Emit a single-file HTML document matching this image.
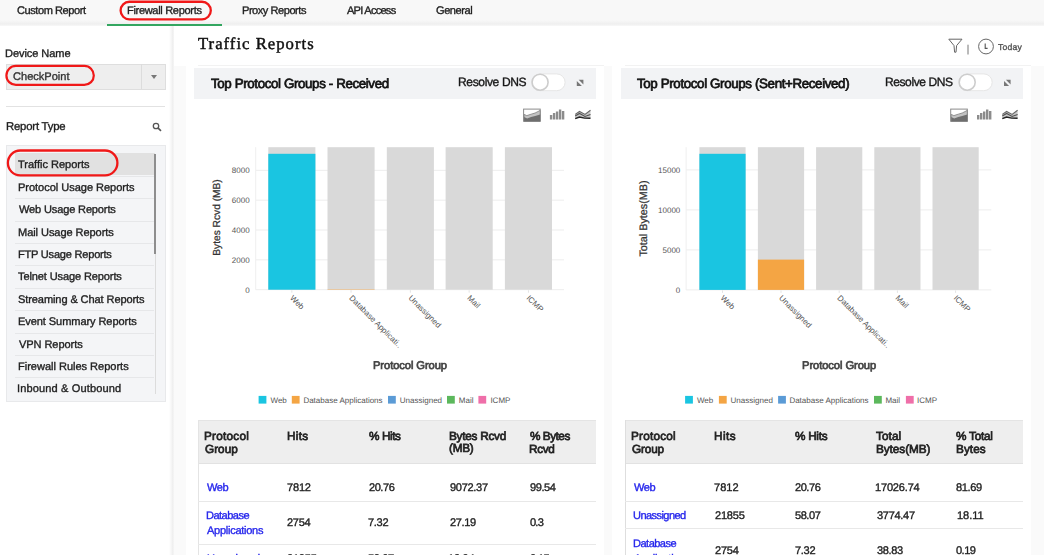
<!DOCTYPE html>
<html><head><meta charset="utf-8"><title>Traffic Reports</title><style>
*{margin:0;padding:0;box-sizing:border-box}
html,body{width:1044px;height:555px;overflow:hidden;background:#fff}
body{position:relative;font-family:'Liberation Sans', sans-serif;text-rendering:geometricPrecision}
.t{position:absolute;white-space:nowrap;will-change:transform}
.r{-webkit-text-stroke:0.35px currentColor}
.s{-webkit-text-stroke:0.45px currentColor}
.sb{-webkit-text-stroke:0.7px currentColor}
.a{position:absolute}
</style></head>
<body>

<!-- top bar -->
<div class="a" style="left:0;top:0;width:1044px;height:26px;background:linear-gradient(#f8f8f8 0,#f8f8f8 20px,#efefef 24px,#f6f6f6 25.5px,#fff 26px)"></div>
<div class="a" style="left:107px;top:23.5px;width:115px;height:2.1px;background:#33a660"></div>
<!-- sidebar right shadow line -->
<div class="a" style="left:169px;top:26px;width:5px;height:529px;background:linear-gradient(90deg,#fff,#f3f3f3 60%,#ececec 80%,#fbfbfb)"></div>
<!-- main bg -->
<div class="a" style="left:174px;top:66px;width:870px;height:489px;background:#fafafa"></div>
<div class="a" style="left:186px;top:65.8px;width:418px;height:490px;background:#fff"></div><div class="a" style="left:198px;top:65px;width:406px;height:1px;background:#f2f2f2"></div>
<div class="a" style="left:612px;top:65.8px;width:419px;height:490px;background:#fff"></div><div class="a" style="left:625px;top:65px;width:406px;height:1px;background:#f2f2f2"></div>
<!-- card headers -->
<div class="a" style="left:194px;top:67.5px;width:402px;height:31.5px;background:#f2f3f5"></div>
<div class="a" style="left:621px;top:67.5px;width:402px;height:31.5px;background:#f2f3f5"></div>
<!-- select -->
<div class="a" style="left:5.5px;top:63.5px;width:160px;height:26px;background:#eeeeee;border:1px solid #dedede"></div>
<div class="a" style="left:141px;top:64px;width:1px;height:25px;background:#dcdcdc"></div>
<div class="a" style="left:150.6px;top:74.6px;width:0;height:0;border-left:3px solid transparent;border-right:3px solid transparent;border-top:4px solid #777"></div>
<div class="a" style="left:6px;top:106px;width:159px;height:1px;background:#e2e2e2"></div>
<!-- list panel -->
<div class="a" style="left:5.5px;top:144.5px;width:160px;height:257px;background:#f4f5f7;border:1px solid #e8e9eb"></div>
<div class="a" style="left:14.5px;top:153.3px;width:140px;height:22px;background:#e1e1e1"></div>
<div class="a" style="left:154.3px;top:153.5px;width:1.8px;height:100px;background:#8e8e8e"></div>
<div class="a" style="left:154.5px;top:253.5px;width:1.5px;height:140px;background:#dcdcdc"></div>
<div class="a" style="left:14.7px;top:175.7px;width:139.6px;height:1px;background:#e6e7e9"></div>
<div class="a" style="left:14.7px;top:198.1px;width:139.6px;height:1px;background:#e6e7e9"></div>
<div class="a" style="left:14.7px;top:220.5px;width:139.6px;height:1px;background:#e6e7e9"></div>
<div class="a" style="left:14.7px;top:242.9px;width:139.6px;height:1px;background:#e6e7e9"></div>
<div class="a" style="left:14.7px;top:265.3px;width:139.6px;height:1px;background:#e6e7e9"></div>
<div class="a" style="left:14.7px;top:287.7px;width:139.6px;height:1px;background:#e6e7e9"></div>
<div class="a" style="left:14.7px;top:310.1px;width:139.6px;height:1px;background:#e6e7e9"></div>
<div class="a" style="left:14.7px;top:332.5px;width:139.6px;height:1px;background:#e6e7e9"></div>
<div class="a" style="left:14.7px;top:354.9px;width:139.6px;height:1px;background:#e6e7e9"></div>
<div class="a" style="left:14.7px;top:377.3px;width:139.6px;height:1px;background:#e6e7e9"></div>

<!-- tables -->
<div class="a" style="left:198px;top:419.5px;width:398px;height:44px;background:#eeeeee;border-top:1px solid #e4e4e4;border-bottom:1px solid #e2e2e2"></div>
<div class="a" style="left:198px;top:419.5px;width:1px;height:136px;background:#e4e4e4"></div>
<div class="a" style="left:198px;top:500.5px;width:398px;height:1px;background:#e8e8e8"></div>
<div class="a" style="left:198px;top:544px;width:398px;height:1px;background:#e8e8e8"></div>
<div class="a" style="left:624.5px;top:419.5px;width:398px;height:44px;background:#eeeeee;border-top:1px solid #e4e4e4;border-bottom:1px solid #e2e2e2"></div>
<div class="a" style="left:624.5px;top:419.5px;width:1px;height:136px;background:#dedede"></div>
<div class="a" style="left:624.5px;top:500.5px;width:398px;height:1px;background:#e8e8e8"></div>
<div class="a" style="left:624.5px;top:528.3px;width:398px;height:1px;background:#e8e8e8"></div>

<svg class="a" style="left:0;top:0" width="1044" height="555" viewBox="0 0 1044 555" font-family="Liberation Sans, sans-serif"><line x1="255.7" y1="289.7" x2="564" y2="289.7" stroke="#ededed" stroke-width="1"/><text x="249.6" y="292.59999999999997" text-anchor="end" font-size="8" fill="#555">0</text><line x1="255.7" y1="259.85" x2="564" y2="259.85" stroke="#ededed" stroke-width="1"/><text x="249.6" y="262.75" text-anchor="end" font-size="8" fill="#555">2000</text><line x1="255.7" y1="230.0" x2="564" y2="230.0" stroke="#ededed" stroke-width="1"/><text x="249.6" y="232.9" text-anchor="end" font-size="8" fill="#555">4000</text><line x1="255.7" y1="200.15" x2="564" y2="200.15" stroke="#ededed" stroke-width="1"/><text x="249.6" y="203.05" text-anchor="end" font-size="8" fill="#555">6000</text><line x1="255.7" y1="170.3" x2="564" y2="170.3" stroke="#ededed" stroke-width="1"/><text x="249.6" y="173.20000000000002" text-anchor="end" font-size="8" fill="#555">8000</text><line x1="255.7" y1="147.2" x2="255.7" y2="289.7" stroke="#efefef" stroke-width="1"/><rect x="268.3" y="147.2" width="47.1" height="142.5" fill="#d9d9d9"/><rect x="268.3" y="153.8" width="47.1" height="135.89999999999998" fill="#1ac5e1"/><line x1="291.85" y1="290.2" x2="291.85" y2="292.7" stroke="#e4e4e4" stroke-width="1"/><text transform="translate(289.45000000000005,298.4) rotate(45)" font-size="8" fill="#555">Web</text><rect x="327.5" y="147.2" width="47.1" height="142.5" fill="#d9d9d9"/><rect x="327.5" y="289.3" width="47.1" height="0.39999999999997726" fill="#f4a544"/><line x1="351.05" y1="290.2" x2="351.05" y2="292.7" stroke="#e4e4e4" stroke-width="1"/><text transform="translate(348.65000000000003,298.4) rotate(45)" font-size="8" fill="#555">Database Applicati..</text><rect x="386.8" y="147.2" width="47.1" height="142.5" fill="#d9d9d9"/><line x1="410.35" y1="290.2" x2="410.35" y2="292.7" stroke="#e4e4e4" stroke-width="1"/><text transform="translate(407.95000000000005,298.4) rotate(45)" font-size="8" fill="#555">Unassigned</text><rect x="445.6" y="147.2" width="47.1" height="142.5" fill="#d9d9d9"/><line x1="469.15000000000003" y1="290.2" x2="469.15000000000003" y2="292.7" stroke="#e4e4e4" stroke-width="1"/><text transform="translate(466.75000000000006,298.4) rotate(45)" font-size="8" fill="#555">Mail</text><rect x="504.9" y="147.2" width="47.1" height="142.5" fill="#d9d9d9"/><line x1="528.4499999999999" y1="290.2" x2="528.4499999999999" y2="292.7" stroke="#e4e4e4" stroke-width="1"/><text transform="translate(526.05,298.4) rotate(45)" font-size="8" fill="#555">ICMP</text><text transform="translate(219.6,217.5) rotate(-90)" text-anchor="middle" font-size="10.2" fill="#333" stroke="#333" stroke-width="0.25">Bytes Rcvd (MB)</text><line x1="686.1" y1="289.9" x2="991.3" y2="289.9" stroke="#ededed" stroke-width="1"/><text x="680.3" y="292.79999999999995" text-anchor="end" font-size="8" fill="#555">0</text><line x1="686.1" y1="249.9" x2="991.3" y2="249.9" stroke="#ededed" stroke-width="1"/><text x="680.3" y="252.8" text-anchor="end" font-size="8" fill="#555">5000</text><line x1="686.1" y1="209.9" x2="991.3" y2="209.9" stroke="#ededed" stroke-width="1"/><text x="680.3" y="212.8" text-anchor="end" font-size="8" fill="#555">10000</text><line x1="686.1" y1="169.9" x2="991.3" y2="169.9" stroke="#ededed" stroke-width="1"/><text x="680.3" y="172.8" text-anchor="end" font-size="8" fill="#555">15000</text><line x1="686.1" y1="147.2" x2="686.1" y2="289.9" stroke="#efefef" stroke-width="1"/><rect x="699.4" y="147.2" width="46.2" height="142.7" fill="#d9d9d9"/><rect x="699.4" y="153.8" width="46.2" height="136.09999999999997" fill="#1ac5e1"/><line x1="722.5" y1="290.4" x2="722.5" y2="292.9" stroke="#e4e4e4" stroke-width="1"/><text transform="translate(720.1,298.4) rotate(45)" font-size="8" fill="#555">Web</text><rect x="757.9" y="147.2" width="46.2" height="142.7" fill="#d9d9d9"/><rect x="757.9" y="259.6" width="46.2" height="30.299999999999955" fill="#f4a544"/><line x1="781.0" y1="290.4" x2="781.0" y2="292.9" stroke="#e4e4e4" stroke-width="1"/><text transform="translate(778.6,298.4) rotate(45)" font-size="8" fill="#555">Unassigned</text><rect x="816.1" y="147.2" width="46.2" height="142.7" fill="#d9d9d9"/><line x1="839.2" y1="290.4" x2="839.2" y2="292.9" stroke="#e4e4e4" stroke-width="1"/><text transform="translate(836.8000000000001,298.4) rotate(45)" font-size="8" fill="#555">Database Applicati..</text><rect x="874.3" y="147.2" width="46.2" height="142.7" fill="#d9d9d9"/><line x1="897.4" y1="290.4" x2="897.4" y2="292.9" stroke="#e4e4e4" stroke-width="1"/><text transform="translate(895.0,298.4) rotate(45)" font-size="8" fill="#555">Mail</text><rect x="932.5" y="147.2" width="46.2" height="142.7" fill="#d9d9d9"/><line x1="955.6" y1="290.4" x2="955.6" y2="292.9" stroke="#e4e4e4" stroke-width="1"/><text transform="translate(953.2,298.4) rotate(45)" font-size="8" fill="#555">ICMP</text><text transform="translate(647.0,218.5) rotate(-90)" text-anchor="middle" font-size="10.8" fill="#333" stroke="#333" stroke-width="0.25">Total Bytes(MB)</text><rect x="258.6" y="395.9" width="7.8" height="7.7" fill="#1ac5e1"/><text x="270.5" y="402.6" font-size="8" fill="#555">Web</text><rect x="291.8" y="395.9" width="7.8" height="7.7" fill="#f4a544"/><text x="303.4" y="402.6" font-size="8" fill="#555">Database Applications</text><rect x="388" y="395.9" width="7.8" height="7.7" fill="#5b9bd6"/><text x="399.8" y="402.6" font-size="8" fill="#555">Unassigned</text><rect x="447" y="395.9" width="7.8" height="7.7" fill="#5cb85c"/><text x="458.8" y="402.6" font-size="8" fill="#555">Mail</text><rect x="478.4" y="395.9" width="7.8" height="7.7" fill="#ef6fa9"/><text x="490.4" y="402.6" font-size="8" fill="#555">ICMP</text><rect x="685.1" y="395.9" width="7.8" height="7.7" fill="#1ac5e1"/><text x="696.9" y="402.6" font-size="8" fill="#555">Web</text><rect x="718.9" y="395.9" width="7.8" height="7.7" fill="#f4a544"/><text x="730.6" y="402.6" font-size="8" fill="#555">Unassigned</text><rect x="778.1" y="395.9" width="7.8" height="7.7" fill="#5b9bd6"/><text x="789.4" y="402.6" font-size="8" fill="#555">Database Applications</text><rect x="874" y="395.9" width="7.8" height="7.7" fill="#5cb85c"/><text x="885.4" y="402.6" font-size="8" fill="#555">Mail</text><rect x="905.9" y="395.9" width="7.8" height="7.7" fill="#ef6fa9"/><text x="917" y="402.6" font-size="8" fill="#555">ICMP</text><rect x="120.6" y="1.75" width="90.2" height="17.6" rx="8.8" fill="none" stroke="#f01818" stroke-width="2.3"/><rect x="6.4" y="65.9" width="87.4" height="19" rx="9.5" fill="none" stroke="#f01818" stroke-width="2.2"/><rect x="7.9" y="150.5" width="109.5" height="24.9" rx="12.4" fill="none" stroke="#f01818" stroke-width="2.3"/><rect x="531.7" y="73.9" width="33.4" height="16.8" rx="8.4" fill="#fff" stroke="#e6e6e6" stroke-width="1"/><circle cx="540.1" cy="82.2" r="8" fill="#fff" stroke="#cdcdcd" stroke-width="1.6"/><rect x="958.8" y="73.9" width="33.4" height="16.8" rx="8.4" fill="#fff" stroke="#e6e6e6" stroke-width="1"/><circle cx="967.1999999999999" cy="82.2" r="8" fill="#fff" stroke="#cdcdcd" stroke-width="1.6"/><path d="M576.8 80.9 L576.8 86 L581.9 86 Z M578.6999999999999 79.8 L583.4 79.8 L583.4 84.5 Z" fill="#777"/><path d="M1004.0 80.9 L1004.0 86 L1009.1 86 Z M1005.9 79.8 L1010.6 79.8 L1010.6 84.5 Z" fill="#777"/><rect x="523.6" y="109.1" width="16.6" height="12.2" fill="#fff" stroke="#8a8a8a" stroke-width="1"/><path d="M524.1 114.4 L526.8000000000001 115.6 L531.1 114.2 L535.1 113 L540.2 110.4 L540.2 121.3 L524.1 121.3 Z" fill="#c2c2c2" stroke="#808080" stroke-width="0.8"/><path d="M524.1 117 L527.1 118.5 L531.1 117 L535.1 116 L540.2 114.5 L540.2 121.3 L524.1 121.3 Z" fill="#6e6e6e"/><rect x="549.9" y="115.0" width="2.4" height="4.5" fill="#8c8c8c"/><rect x="552.9" y="113.0" width="2.4" height="6.5" fill="#8c8c8c"/><rect x="555.9" y="111.5" width="2.4" height="8" fill="#8c8c8c"/><rect x="558.9" y="109.5" width="2.4" height="10" fill="#8c8c8c"/><rect x="561.9" y="111.0" width="2.4" height="8.5" fill="#8c8c8c"/><path d="M575.2 118.6 L575.2 114.4 L579.5 111.5 L585 114.4 L590.5 110.2 L590.5 118.3 L584.5 118.1 L579.5 117 Z" fill="#c8c8c8"/><path d="M575.2 114.4 L579.5 111.5 L585 114.4 L590.5 110.2" fill="none" stroke="#666" stroke-width="1.1"/><path d="M575.2 115.9 L579.5 113.4 L585 116.4 L590.5 114.6" fill="none" stroke="#505050" stroke-width="1.1"/><path d="M575.2 118.6 L579.5 117 L584.5 118.1 L590.5 118.3" fill="none" stroke="#222" stroke-width="1.4"/><rect x="950.7" y="109.1" width="16.6" height="12.2" fill="#fff" stroke="#8a8a8a" stroke-width="1"/><path d="M951.2 114.4 L953.9000000000001 115.6 L958.2 114.2 L962.2 113 L967.3000000000001 110.4 L967.3000000000001 121.3 L951.2 121.3 Z" fill="#c2c2c2" stroke="#808080" stroke-width="0.8"/><path d="M951.2 117 L954.2 118.5 L958.2 117 L962.2 116 L967.3000000000001 114.5 L967.3000000000001 121.3 L951.2 121.3 Z" fill="#6e6e6e"/><rect x="977.0" y="115.0" width="2.4" height="4.5" fill="#8c8c8c"/><rect x="980.0" y="113.0" width="2.4" height="6.5" fill="#8c8c8c"/><rect x="983.0" y="111.5" width="2.4" height="8" fill="#8c8c8c"/><rect x="986.0" y="109.5" width="2.4" height="10" fill="#8c8c8c"/><rect x="989.0" y="111.0" width="2.4" height="8.5" fill="#8c8c8c"/><path d="M1002.3000000000001 118.6 L1002.3000000000001 114.4 L1006.6 111.5 L1012.1 114.4 L1017.6 110.2 L1017.6 118.3 L1011.6 118.1 L1006.6 117 Z" fill="#c8c8c8"/><path d="M1002.3000000000001 114.4 L1006.6 111.5 L1012.1 114.4 L1017.6 110.2" fill="none" stroke="#666" stroke-width="1.1"/><path d="M1002.3000000000001 115.9 L1006.6 113.4 L1012.1 116.4 L1017.6 114.6" fill="none" stroke="#505050" stroke-width="1.1"/><path d="M1002.3000000000001 118.6 L1006.6 117 L1011.6 118.1 L1017.6 118.3" fill="none" stroke="#222" stroke-width="1.4"/><path d="M948.8 39.2 L962 39.2 L956.6 45.6 L956 52.2 L954.6 52.2 L954 45.6 Z" fill="none" stroke="#666" stroke-width="1" stroke-linejoin="round"/><line x1="968" y1="44.7" x2="968" y2="54.5" stroke="#777" stroke-width="1"/><circle cx="986" cy="46.5" r="7.4" fill="none" stroke="#666" stroke-width="1"/><path d="M985.2 43.6 L985.2 48.4 L987.6 48.4" fill="none" stroke="#555" stroke-width="1.1"/><circle cx="156" cy="126" r="2.7" fill="none" stroke="#555" stroke-width="1.3"/><line x1="157.9" y1="127.9" x2="161" y2="130.8" stroke="#555" stroke-width="1.6"/></svg>
<div class="t r" style="left:17.36px;top:5.59px;font-size:11.05px;line-height:11.05px;letter-spacing:-0.436px;font-weight:400;color:#1e1e1e;font-family:'Liberation Sans', sans-serif">Custom Report</div>
<div class="t r" style="left:126.95px;top:5.59px;font-size:11.05px;line-height:11.05px;letter-spacing:-0.327px;font-weight:400;color:#1e1e1e;font-family:'Liberation Sans', sans-serif">Firewall Reports</div>
<div class="t r" style="left:241.93px;top:5.59px;font-size:11.05px;line-height:11.05px;letter-spacing:-0.461px;font-weight:400;color:#1e1e1e;font-family:'Liberation Sans', sans-serif">Proxy Reports</div>
<div class="t r" style="left:347.21px;top:5.59px;font-size:11.05px;line-height:11.05px;letter-spacing:-0.746px;font-weight:400;color:#1e1e1e;font-family:'Liberation Sans', sans-serif">API Access</div>
<div class="t r" style="left:436.36px;top:5.59px;font-size:11.05px;line-height:11.05px;letter-spacing:-0.445px;font-weight:400;color:#1e1e1e;font-family:'Liberation Sans', sans-serif">General</div>
<div class="t r" style="left:5.21px;top:48.86px;font-size:11.05px;line-height:11.05px;letter-spacing:-0.076px;font-weight:400;color:#1e1e1e;font-family:'Liberation Sans', sans-serif">Device Name</div>
<div class="t r" style="left:13.0px;top:71.5px;font-size:11.05px;line-height:11.05px;letter-spacing:0.002px;font-weight:400;color:#333;font-family:'Liberation Sans', sans-serif">CheckPoint</div>
<div class="t r" style="left:5.76px;top:122.0px;font-size:11.34px;line-height:11.34px;letter-spacing:-0.191px;font-weight:400;color:#1e1e1e;font-family:'Liberation Sans', sans-serif">Report Type</div>
<div class="t r" style="left:18.36px;top:159.59px;font-size:11.05px;line-height:11.05px;letter-spacing:-0.019px;font-weight:400;color:#1e1e1e;font-family:'Liberation Sans', sans-serif">Traffic Reports</div>
<div class="t r" style="left:18.25px;top:183.43px;font-size:11.05px;line-height:11.05px;letter-spacing:-0.039px;font-weight:400;color:#1e1e1e;font-family:'Liberation Sans', sans-serif">Protocol Usage Reports</div>
<div class="t r" style="left:18.57px;top:205.27px;font-size:11.05px;line-height:11.05px;letter-spacing:-0.153px;font-weight:400;color:#1e1e1e;font-family:'Liberation Sans', sans-serif">Web Usage Reports</div>
<div class="t r" style="left:18.25px;top:227.61px;font-size:11.05px;line-height:11.05px;letter-spacing:-0.069px;font-weight:400;color:#1e1e1e;font-family:'Liberation Sans', sans-serif">Mail Usage Reports</div>
<div class="t r" style="left:18.25px;top:250.25px;font-size:11.05px;line-height:11.05px;letter-spacing:-0.221px;font-weight:400;color:#1e1e1e;font-family:'Liberation Sans', sans-serif">FTP Usage Reports</div>
<div class="t r" style="left:18.36px;top:271.59px;font-size:11.05px;line-height:11.05px;letter-spacing:-0.125px;font-weight:400;color:#1e1e1e;font-family:'Liberation Sans', sans-serif">Telnet Usage Reports</div>
<div class="t r" style="left:18.36px;top:295.43px;font-size:11.05px;line-height:11.05px;letter-spacing:-0.103px;font-weight:400;color:#1e1e1e;font-family:'Liberation Sans', sans-serif">Streaming &amp; Chat Reports</div>
<div class="t r" style="left:18.25px;top:317.27px;font-size:11.05px;line-height:11.05px;letter-spacing:-0.084px;font-weight:400;color:#1e1e1e;font-family:'Liberation Sans', sans-serif">Event Summary Reports</div>
<div class="t r" style="left:18.57px;top:339.61px;font-size:11.05px;line-height:11.05px;letter-spacing:-0.08px;font-weight:400;color:#1e1e1e;font-family:'Liberation Sans', sans-serif">VPN Reports</div>
<div class="t r" style="left:18.25px;top:362.25px;font-size:11.05px;line-height:11.05px;letter-spacing:-0.022px;font-weight:400;color:#1e1e1e;font-family:'Liberation Sans', sans-serif">Firewall Rules Reports</div>
<div class="t r" style="left:17.43px;top:383.59px;font-size:11.05px;line-height:11.05px;letter-spacing:0.129px;font-weight:400;color:#1e1e1e;font-family:'Liberation Sans', sans-serif">Inbound &amp; Outbound</div>
<div class="t s" style="left:198.0px;top:36.0px;font-size:16.68px;line-height:16.68px;letter-spacing:1.016px;font-weight:400;color:#111;font-family:'Liberation Serif', serif">Traffic Reports</div>
<div class="t r" style="left:998.38px;top:43.15px;font-size:8.63px;line-height:8.63px;letter-spacing:0.21px;font-weight:400;color:#555;font-family:'Liberation Sans', sans-serif">Today</div>
<div class="t sb" style="left:210.65px;top:76.68px;font-size:13.37px;line-height:13.37px;letter-spacing:-0.387px;font-weight:400;color:#111;font-family:'Liberation Sans', sans-serif">Top Protocol Groups - Received</div>
<div class="t r" style="left:457.68px;top:75.63px;font-size:12.06px;line-height:12.06px;letter-spacing:-0.369px;font-weight:400;color:#181818;font-family:'Liberation Sans', sans-serif">Resolve DNS</div>
<div class="t sb" style="left:637.11px;top:76.5px;font-size:13.37px;line-height:13.37px;letter-spacing:-0.376px;font-weight:400;color:#111;font-family:'Liberation Sans', sans-serif">Top Protocol Groups (Sent+Received)</div>
<div class="t r" style="left:884.68px;top:75.63px;font-size:12.06px;line-height:12.06px;letter-spacing:-0.433px;font-weight:400;color:#181818;font-family:'Liberation Sans', sans-serif">Resolve DNS</div>
<div class="t sb" style="left:372.77px;top:361.15px;font-size:11.19px;line-height:11.19px;letter-spacing:-0.089px;font-weight:400;color:#444;font-family:'Liberation Sans', sans-serif">Protocol Group</div>
<div class="t sb" style="left:801.77px;top:360.56px;font-size:11.19px;line-height:11.19px;letter-spacing:-0.086px;font-weight:400;color:#444;font-family:'Liberation Sans', sans-serif">Protocol Group</div>
<div class="t sb" style="left:203.58px;top:430.59px;font-size:11.77px;line-height:11.77px;letter-spacing:0.233px;font-weight:400;color:#222;font-family:'Liberation Sans', sans-serif">Protocol</div>
<div class="t sb" style="left:204.6px;top:443.93px;font-size:11.77px;line-height:11.77px;letter-spacing:0.005px;font-weight:400;color:#222;font-family:'Liberation Sans', sans-serif">Group</div>
<div class="t sb" style="left:287.26px;top:430.59px;font-size:11.77px;line-height:11.77px;letter-spacing:0.324px;font-weight:400;color:#222;font-family:'Liberation Sans', sans-serif">Hits</div>
<div class="t sb" style="left:368.52px;top:430.59px;font-size:11.77px;line-height:11.77px;letter-spacing:-0.402px;font-weight:400;color:#222;font-family:'Liberation Sans', sans-serif">% Hits</div>
<div class="t sb" style="left:448.76px;top:430.59px;font-size:11.77px;line-height:11.77px;letter-spacing:-0.256px;font-weight:400;color:#222;font-family:'Liberation Sans', sans-serif">Bytes Rcvd</div>
<div class="t sb" style="left:448.96px;top:442.93px;font-size:11.77px;line-height:11.77px;letter-spacing:-0.279px;font-weight:400;color:#222;font-family:'Liberation Sans', sans-serif">(MB)</div>
<div class="t sb" style="left:530.0px;top:430.59px;font-size:11.77px;line-height:11.77px;letter-spacing:-0.474px;font-weight:400;color:#222;font-family:'Liberation Sans', sans-serif">% Bytes</div>
<div class="t sb" style="left:529.1px;top:443.93px;font-size:11.77px;line-height:11.77px;letter-spacing:-0.343px;font-weight:400;color:#222;font-family:'Liberation Sans', sans-serif">Rcvd</div>
<div class="t r" style="left:206.53px;top:483.27px;font-size:11.05px;line-height:11.05px;letter-spacing:-0.404px;font-weight:400;color:#2626ec;font-family:'Liberation Sans', sans-serif">Web</div>
<div class="t r" style="left:287.13px;top:483.27px;font-size:11.05px;line-height:11.05px;letter-spacing:-0.195px;font-weight:400;color:#222;font-family:'Liberation Sans', sans-serif">7812</div>
<div class="t r" style="left:368.52px;top:483.27px;font-size:11.05px;line-height:11.05px;letter-spacing:-0.462px;font-weight:400;color:#222;font-family:'Liberation Sans', sans-serif">20.76</div>
<div class="t r" style="left:449.56px;top:483.27px;font-size:11.05px;line-height:11.05px;letter-spacing:-0.309px;font-weight:400;color:#222;font-family:'Liberation Sans', sans-serif">9072.37</div>
<div class="t r" style="left:530.0px;top:483.27px;font-size:11.05px;line-height:11.05px;letter-spacing:-0.455px;font-weight:400;color:#222;font-family:'Liberation Sans', sans-serif">99.54</div>
<div class="t r" style="left:206.21px;top:511.25px;font-size:11.05px;line-height:11.05px;letter-spacing:-0.535px;font-weight:400;color:#2626ec;font-family:'Liberation Sans', sans-serif">Database</div>
<div class="t r" style="left:206.53px;top:526.25px;font-size:11.05px;line-height:11.05px;letter-spacing:-0.28px;font-weight:400;color:#2626ec;font-family:'Liberation Sans', sans-serif">Applications</div>
<div class="t r" style="left:287.36px;top:517.5px;font-size:11.05px;line-height:11.05px;letter-spacing:-0.305px;font-weight:400;color:#222;font-family:'Liberation Sans', sans-serif">2754</div>
<div class="t r" style="left:367.59px;top:517.5px;font-size:11.05px;line-height:11.05px;letter-spacing:-0.317px;font-weight:400;color:#222;font-family:'Liberation Sans', sans-serif">7.32</div>
<div class="t r" style="left:449.56px;top:517.5px;font-size:11.05px;line-height:11.05px;letter-spacing:-0.395px;font-weight:400;color:#222;font-family:'Liberation Sans', sans-serif">27.19</div>
<div class="t r" style="left:530.0px;top:517.5px;font-size:11.05px;line-height:11.05px;letter-spacing:-0.789px;font-weight:400;color:#222;font-family:'Liberation Sans', sans-serif">0.3</div>
<div class="t r" style="left:206.5px;top:554.25px;font-size:11.05px;line-height:11.05px;letter-spacing:-0.572px;font-weight:400;color:#2626ec;font-family:'Liberation Sans', sans-serif">Unassigned</div>
<div class="t r" style="left:287.36px;top:554.25px;font-size:11.05px;line-height:11.05px;letter-spacing:-0.23px;font-weight:400;color:#222;font-family:'Liberation Sans', sans-serif">21855</div>
<div class="t r" style="left:368.42px;top:554.25px;font-size:11.05px;line-height:11.05px;letter-spacing:-0.39px;font-weight:400;color:#222;font-family:'Liberation Sans', sans-serif">58.07</div>
<div class="t r" style="left:448.44px;top:554.25px;font-size:11.05px;line-height:11.05px;letter-spacing:-0.256px;font-weight:400;color:#222;font-family:'Liberation Sans', sans-serif">18.94</div>
<div class="t r" style="left:530.0px;top:554.25px;font-size:11.05px;line-height:11.05px;letter-spacing:-0.586px;font-weight:400;color:#222;font-family:'Liberation Sans', sans-serif">0.15</div>
<div class="t sb" style="left:630.62px;top:430.59px;font-size:11.77px;line-height:11.77px;letter-spacing:0.221px;font-weight:400;color:#222;font-family:'Liberation Sans', sans-serif">Protocol</div>
<div class="t sb" style="left:631.74px;top:443.93px;font-size:11.77px;line-height:11.77px;letter-spacing:-0.146px;font-weight:400;color:#222;font-family:'Liberation Sans', sans-serif">Group</div>
<div class="t sb" style="left:713.76px;top:430.59px;font-size:11.77px;line-height:11.77px;letter-spacing:0.437px;font-weight:400;color:#222;font-family:'Liberation Sans', sans-serif">Hits</div>
<div class="t sb" style="left:795.0px;top:430.59px;font-size:11.77px;line-height:11.77px;letter-spacing:-0.295px;font-weight:400;color:#222;font-family:'Liberation Sans', sans-serif">% Hits</div>
<div class="t sb" style="left:876.13px;top:430.59px;font-size:11.77px;line-height:11.77px;letter-spacing:0.073px;font-weight:400;color:#222;font-family:'Liberation Sans', sans-serif">Total</div>
<div class="t sb" style="left:875.76px;top:443.93px;font-size:11.77px;line-height:11.77px;letter-spacing:-0.053px;font-weight:400;color:#222;font-family:'Liberation Sans', sans-serif">Bytes(MB)</div>
<div class="t sb" style="left:956.36px;top:430.59px;font-size:11.77px;line-height:11.77px;letter-spacing:-0.239px;font-weight:400;color:#222;font-family:'Liberation Sans', sans-serif">% Total</div>
<div class="t sb" style="left:956.26px;top:443.93px;font-size:11.77px;line-height:11.77px;letter-spacing:0.047px;font-weight:400;color:#222;font-family:'Liberation Sans', sans-serif">Bytes</div>
<div class="t r" style="left:633.73px;top:483.27px;font-size:11.05px;line-height:11.05px;letter-spacing:-0.404px;font-weight:400;color:#2626ec;font-family:'Liberation Sans', sans-serif">Web</div>
<div class="t r" style="left:713.73px;top:483.27px;font-size:11.05px;line-height:11.05px;letter-spacing:-0.008px;font-weight:400;color:#222;font-family:'Liberation Sans', sans-serif">7812</div>
<div class="t r" style="left:795.0px;top:483.27px;font-size:11.05px;line-height:11.05px;letter-spacing:-0.461px;font-weight:400;color:#222;font-family:'Liberation Sans', sans-serif">20.76</div>
<div class="t r" style="left:875.44px;top:483.27px;font-size:11.05px;line-height:11.05px;letter-spacing:-0.191px;font-weight:400;color:#222;font-family:'Liberation Sans', sans-serif">17026.74</div>
<div class="t r" style="left:956.36px;top:483.27px;font-size:11.05px;line-height:11.05px;letter-spacing:-0.35px;font-weight:400;color:#222;font-family:'Liberation Sans', sans-serif">81.69</div>
<div class="t r" style="left:633.0px;top:511.25px;font-size:11.05px;line-height:11.05px;letter-spacing:-0.572px;font-weight:400;color:#2626ec;font-family:'Liberation Sans', sans-serif">Unassigned</div>
<div class="t r" style="left:714.56px;top:511.25px;font-size:11.05px;line-height:11.05px;letter-spacing:-0.23px;font-weight:400;color:#222;font-family:'Liberation Sans', sans-serif">21855</div>
<div class="t r" style="left:794.9px;top:511.25px;font-size:11.05px;line-height:11.05px;letter-spacing:-0.459px;font-weight:400;color:#222;font-family:'Liberation Sans', sans-serif">58.07</div>
<div class="t r" style="left:876.56px;top:511.25px;font-size:11.05px;line-height:11.05px;letter-spacing:-0.31px;font-weight:400;color:#222;font-family:'Liberation Sans', sans-serif">3774.47</div>
<div class="t r" style="left:956.54px;top:511.25px;font-size:11.05px;line-height:11.05px;letter-spacing:-0.019px;font-weight:400;color:#222;font-family:'Liberation Sans', sans-serif">18.11</div>
<div class="t r" style="left:632.71px;top:539.43px;font-size:11.05px;line-height:11.05px;letter-spacing:-0.521px;font-weight:400;color:#2626ec;font-family:'Liberation Sans', sans-serif">Database</div>
<div class="t r" style="left:633.73px;top:554.43px;font-size:11.05px;line-height:11.05px;letter-spacing:-0.266px;font-weight:400;color:#2626ec;font-family:'Liberation Sans', sans-serif">Applications</div>
<div class="t r" style="left:714.56px;top:546.43px;font-size:11.05px;line-height:11.05px;letter-spacing:-0.258px;font-weight:400;color:#222;font-family:'Liberation Sans', sans-serif">2754</div>
<div class="t r" style="left:794.77px;top:546.43px;font-size:11.05px;line-height:11.05px;letter-spacing:-0.317px;font-weight:400;color:#222;font-family:'Liberation Sans', sans-serif">7.32</div>
<div class="t r" style="left:876.56px;top:546.43px;font-size:11.05px;line-height:11.05px;letter-spacing:-0.395px;font-weight:400;color:#222;font-family:'Liberation Sans', sans-serif">38.83</div>
<div class="t r" style="left:956.36px;top:546.43px;font-size:11.05px;line-height:11.05px;letter-spacing:-0.534px;font-weight:400;color:#222;font-family:'Liberation Sans', sans-serif">0.19</div>
</body></html>
